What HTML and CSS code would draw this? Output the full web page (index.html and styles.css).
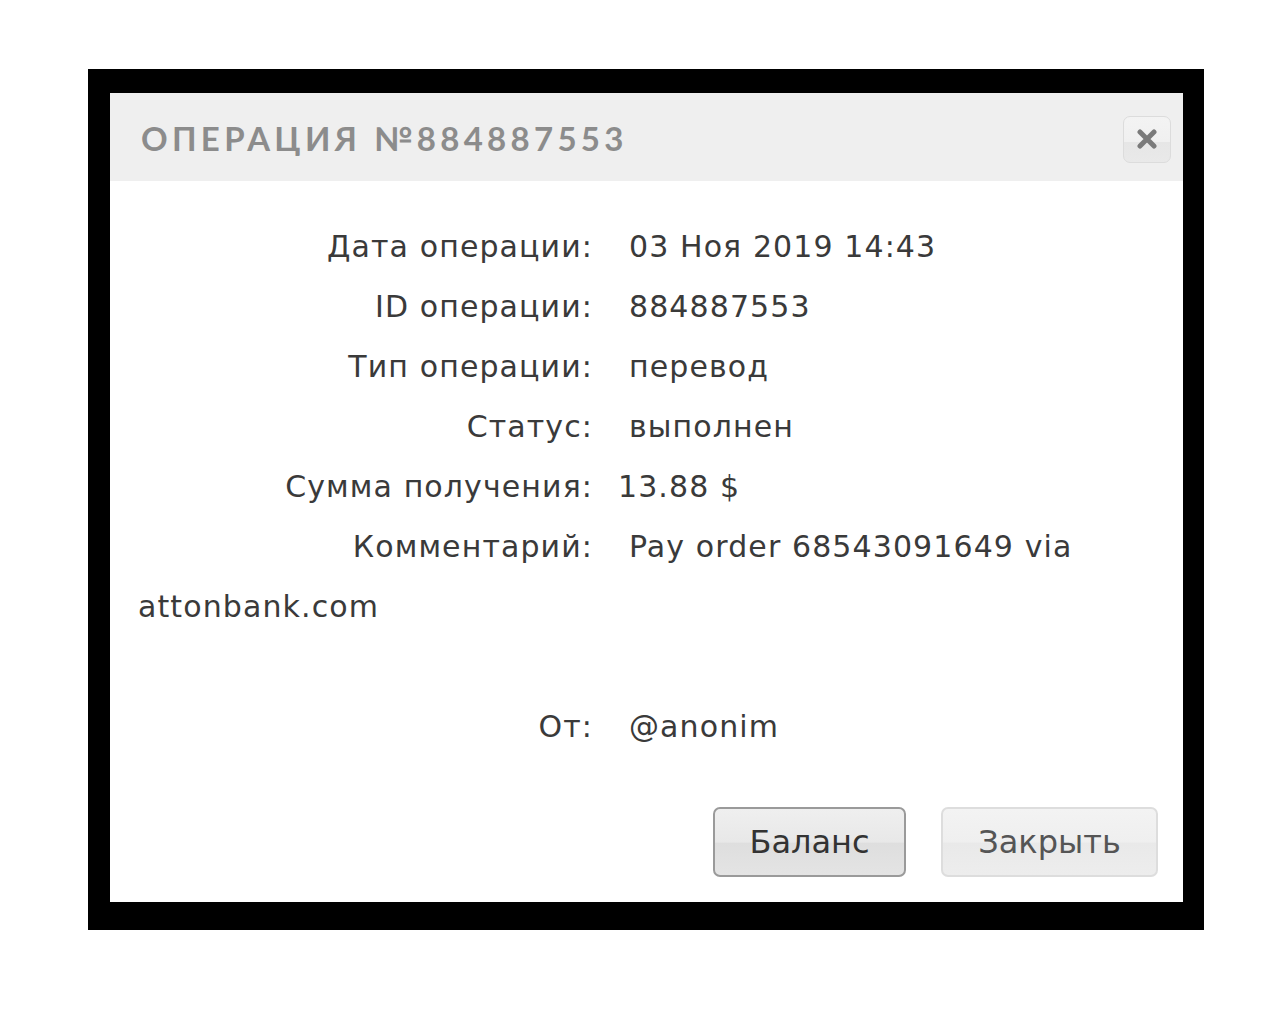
FILE: index.html
```html
<!DOCTYPE html>
<html lang="ru">
<head>
<meta charset="utf-8">
<title>Операция №884887553</title>
<link rel="stylesheet" href="styles.css">
</head>
<body>
<div class="frame">
  <div class="dialog">
    <div class="dialog-header">
      <h1 class="dialog-title">Операция №884887553</h1>
      <button class="close-btn" aria-label="Закрыть">
        <svg width="22" height="20" viewBox="0 0 22 20"><path d="M4 3 L18 17 M18 3 L4 17" stroke="#7a7a7a" stroke-width="5" stroke-linecap="round"/></svg>
      </button>
    </div>
    <div class="dialog-body">
      <div class="row"><span class="label">Дата операции:</span>03 Ноя 2019 14:43</div>
      <div class="row"><span class="label">ID операции:</span>884887553</div>
      <div class="row"><span class="label">Тип операции:</span>перевод</div>
      <div class="row"><span class="label">Статус:</span>выполнен</div>
      <div class="row"><span class="label label-tight">Сумма получения:</span>13.88 $</div>
      <div class="row"><span class="label">Комментарий:</span><span class="comment">Pay order 68543091649 via</span> <span class="domain">attonbank.com</span></div>
      <div class="row spacer"></div>
      <div class="row"><span class="label">От:</span>@anonim</div>
    </div>
    <div class="dialog-footer">
      <button class="btn btn-primary">Баланс</button>
      <button class="btn btn-light">Закрыть</button>
    </div>
  </div>
</div>
</body>
</html>
```

FILE: styles.css
```css
html, body {
  margin: 0;
  padding: 0;
  background: #ffffff;
}

body {
  width: 1280px;
  height: 1024px;
  padding-top: 69px;
  padding-left: 88px;
  box-sizing: border-box;
}

.frame {
  width: 1116px;
  height: 861px;
  background: #000;
  padding: 24px 21px 28px 22px;
  box-sizing: border-box;
}

.dialog {
  background: #fff;
  width: 1073px;
  height: 809px;
  display: flex;
  flex-direction: column;
}

.dialog-header {
  height: 88px;
  background: #efefef;
  display: flex;
  align-items: center;
  justify-content: space-between;
  padding: 0 12px 0 31px;
  flex-shrink: 0;
}

.dialog-title {
  margin: 0;
  font-family: "Lato", "DejaVu Sans", sans-serif;
  font-weight: 700;
  font-size: 33px;
  letter-spacing: 4.3px;
  text-transform: uppercase;
  color: #8c8c8c;
  line-height: 1;
  padding-top: 2px;
}

.close-btn {
  width: 48px;
  height: 47px;
  margin-top: 4px;
  border: 1px solid #dcdcdc;
  border-radius: 7px;
  background: linear-gradient(#f3f3f3 0%, #f0f0f0 55%, #e6e6e6 56%, #e9e9e9 100%);
  display: flex;
  align-items: center;
  justify-content: center;
  padding: 0;
}

.dialog-body {
  padding: 36px 23px 0 28px;
  font-family: "DejaVu Sans", sans-serif;
  font-size: 30px;
  letter-spacing: 1.1px;
  color: #3a3a3a;
}

.row {
  line-height: 60px;
}

.spacer {
  height: 60px;
}

.label {
  display: inline-block;
  width: 455px;
  text-align: right;
  margin-right: 36px;
}

.label-tight {
  margin-right: 25px;
}

.comment,
.domain {
  white-space: nowrap;
}

.dialog-footer {
  margin-top: 50px;
  display: flex;
  justify-content: flex-end;
  gap: 35px;
  padding-right: 25px;
}

.btn {
  height: 70px;
  border-radius: 7px;
  font-family: "DejaVu Sans", sans-serif;
  font-size: 32px;
  padding: 0;
}

.btn-primary {
  width: 193px;
  color: #333;
  border: 2px solid #9a9a9a;
  background: linear-gradient(#efefef 0%, #e8e8e8 50%, #dedede 52%, #e4e4e4 100%);
}

.btn-light {
  width: 217px;
  color: #555;
  border: 2px solid #dddddd;
  background: linear-gradient(#f3f3f3 0%, #efefef 50%, #e9e9e9 52%, #ededed 100%);
}
```
